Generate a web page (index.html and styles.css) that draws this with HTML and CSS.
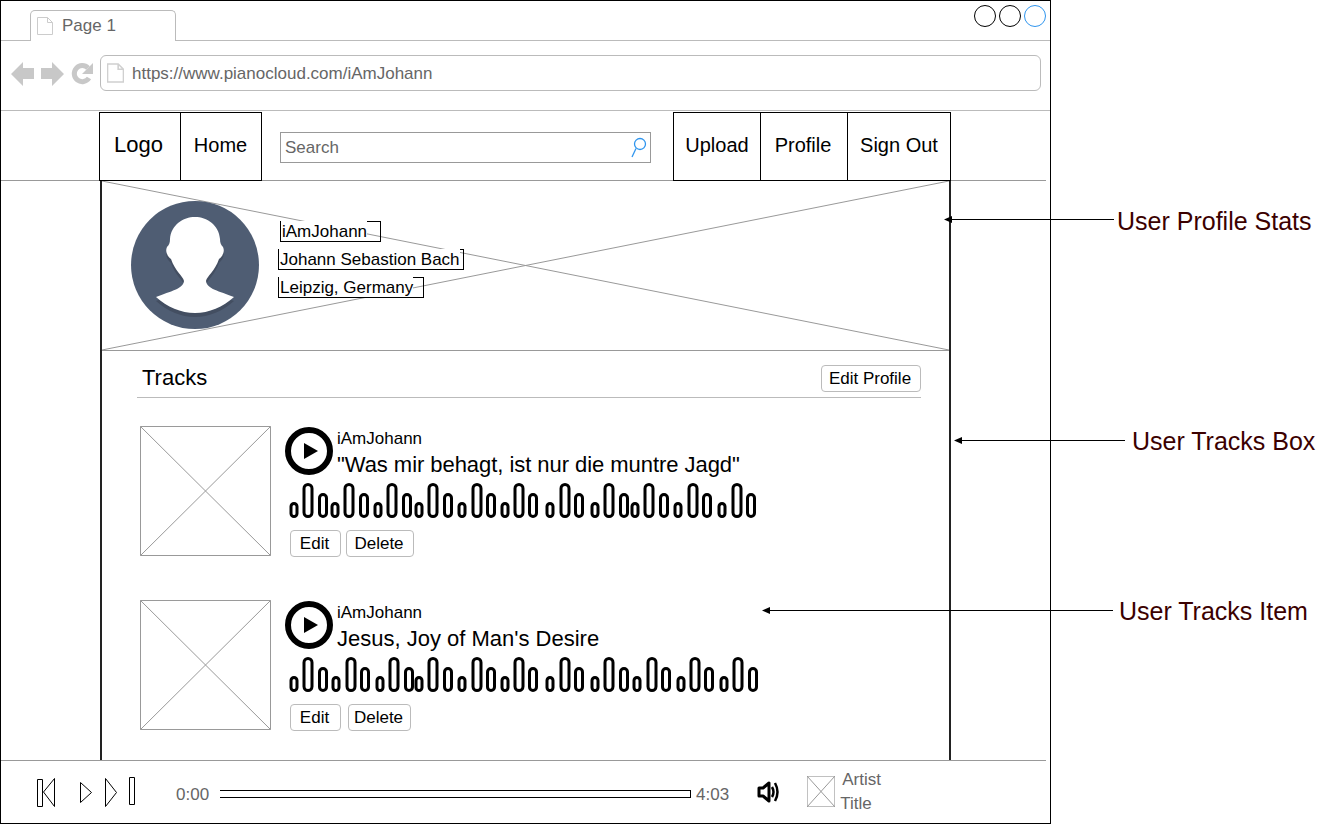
FILE: index.html
```html
<!DOCTYPE html>
<html lang="en">
<head>
<meta charset="utf-8">
<title>PianoCloud wireframe</title>
<link rel="stylesheet" href="styles.css">
</head>
<body>
<svg width="0" height="0" class="defs">
  <symbol id="s" viewBox="-6 0 12 36" overflow="visible"><rect x="-3" y="20.5" width="6" height="13" rx="3"/></symbol>
  <symbol id="m" viewBox="-6 0 12 36" overflow="visible"><rect x="-3.5" y="11.5" width="7" height="22" rx="3.5"/></symbol>
  <symbol id="t" viewBox="-6 0 12 36" overflow="visible"><rect x="-4" y="1.5" width="8" height="32" rx="4"/></symbol>
  <symbol id="doc" viewBox="0 0 16 18"><path d="M.5.5h10l5 5v12H.5zM10.5.5v5h5"/></symbol>
  <symbol id="cross" viewBox="0 0 131 131" preserveAspectRatio="none"><rect x=".5" y=".5" width="130" height="130" vector-effect="non-scaling-stroke"/><path d="M.5.5l130 130M130.500.5l-130 130" vector-effect="non-scaling-stroke"/></symbol>
  <symbol id="play" viewBox="0 0 48 48"><circle cx="24" cy="24" r="21" fill="none" stroke="#000" stroke-width="6"/><path d="M19 16l14 8-14 8z"/></symbol>
</svg>

<main class="window">
  <header class="tabbar">
    <div class="tab">
      <svg class="tab-doc"><use href="#doc"/></svg>
      <span>Page 1</span>
    </div>
    <div class="win-buttons">
      <span class="win-btn"></span><span class="win-btn"></span><span class="win-btn win-btn-blue"></span>
    </div>
  </header>

  <div class="addressbar">
    <svg class="nav-arrows" width="84" height="26" viewBox="0 0 84 26">
      <path d="M0 13L12 1v6h11v11H12v7z"/>
      <path d="M53 13L41 1v6H30v11h11v7z"/>
      <path class="reload" d="M77 7A8 8 0 1 0 78 17"/>
      <path d="M82 2v11H71z"/>
    </svg>
    <div class="address">
      <svg class="address-doc"><use href="#doc"/></svg>
      <span>https://www.pianocloud.com/iAmJohann</span>
    </div>
  </div>

  <nav class="nav">
    <div class="nav-group">
      <a class="nav-cell nav-logo">Logo</a>
      <a class="nav-cell nav-home">Home</a>
    </div>
    <div class="search">
      <span>Search</span>
      <svg width="20" height="24" viewBox="0 0 20 24" class="search-icon"><circle cx="10" cy="9" r="5.500"/><path d="M6 13.500L2 22"/></svg>
    </div>
    <div class="nav-group">
      <a class="nav-cell nav-upload">Upload</a>
      <a class="nav-cell nav-profile">Profile</a>
      <a class="nav-cell nav-signout">Sign Out</a>
    </div>
  </nav>

  <section class="content">
    <div class="hero">
      <svg class="hero-cross" viewBox="0 0 848 169" preserveAspectRatio="none"><path d="M0 0L848 169M848 0L0 169"/></svg>
      <svg class="avatar" width="128" height="128" viewBox="0 0 128 128">
        <circle cx="64" cy="64" r="64" fill="#4f5d73"/>
        <path fill="#434e61" transform="translate(0 4)" d="M25 96C40 90 52 88 53 80C52 75 44 70 40 58C36 55 34 50 36 46C38 44 39 42 39 38C40 24 52 16 64 16C76 16 88 24 89 38C89 42 90 44 92 46C94 50 92 55 88 58C84 70 76 75 75 80C76 88 88 90 103 96C92 106 78 112 64 112C50 112 36 106 25 96Z"/>
        <path fill="#fff" d="M25 96C40 90 52 88 53 80C52 75 44 70 40 58C36 55 34 50 36 46C38 44 39 42 39 38C40 24 52 16 64 16C76 16 88 24 89 38C89 42 90 44 92 46C94 50 92 55 88 58C84 70 76 75 75 80C76 88 88 90 103 96C92 106 78 112 64 112C50 112 36 106 25 96Z"/>
      </svg>
      <div class="labels">
        <div class="label label-user"><span>iAmJohann</span></div>
        <div class="label label-name"><span>Johann Sebastion Bach</span></div>
        <div class="label label-place"><span>Leipzig, Germany</span></div>
      </div>
    </div>

    <div class="tracks-head">
      <h2 class="tracks-title">Tracks</h2>
      <button class="btn btn-profile">Edit Profile</button>
    </div>

    <article class="track">
      <svg class="thumb"><use href="#cross"/></svg>
      <div class="track-info">
        <div class="track-top">
          <svg class="play"><use href="#play"/></svg>
          <div class="track-text">
            <div class="track-artist">iAmJohann</div>
            <div class="track-title track-title-tight">"Was mir behagt, ist nur die muntre Jagd"</div>
          </div>
        </div>
        <svg class="wave" width="480" height="36" viewBox="0 0 480 36">
          <g>
            <use href="#s" x="9" width="12" height="36" transform="translate(-6)"/><use href="#t" x="23" width="12" height="36" transform="translate(-6)"/><use href="#m" x="38" width="12" height="36" transform="translate(-6)"/>
            <use href="#s" x="50" width="12" height="36" transform="translate(-6)"/><use href="#t" x="64" width="12" height="36" transform="translate(-6)"/><use href="#m" x="79" width="12" height="36" transform="translate(-6)"/>
            <use href="#s" x="93" width="12" height="36" transform="translate(-6)"/><use href="#t" x="107" width="12" height="36" transform="translate(-6)"/><use href="#m" x="122" width="12" height="36" transform="translate(-6)"/>
            <use href="#s" x="134" width="12" height="36" transform="translate(-6)"/><use href="#t" x="148" width="12" height="36" transform="translate(-6)"/><use href="#m" x="163" width="12" height="36" transform="translate(-6)"/>
            <use href="#s" x="177" width="12" height="36" transform="translate(-6)"/><use href="#t" x="192" width="12" height="36" transform="translate(-6)"/><use href="#m" x="206" width="12" height="36" transform="translate(-6)"/>
            <use href="#s" x="220" width="12" height="36" transform="translate(-6)"/><use href="#t" x="234" width="12" height="36" transform="translate(-6)"/><use href="#m" x="248" width="12" height="36" transform="translate(-6)"/>
            <use href="#s" x="265" width="12" height="36" transform="translate(-6)"/><use href="#t" x="280" width="12" height="36" transform="translate(-6)"/><use href="#m" x="294" width="12" height="36" transform="translate(-6)"/>
            <use href="#s" x="310" width="12" height="36" transform="translate(-6)"/><use href="#t" x="324" width="12" height="36" transform="translate(-6)"/><use href="#m" x="339" width="12" height="36" transform="translate(-6)"/>
            <use href="#s" x="350" width="12" height="36" transform="translate(-6)"/><use href="#t" x="364" width="12" height="36" transform="translate(-6)"/><use href="#m" x="379" width="12" height="36" transform="translate(-6)"/>
            <use href="#s" x="393" width="12" height="36" transform="translate(-6)"/><use href="#t" x="408" width="12" height="36" transform="translate(-6)"/><use href="#m" x="422" width="12" height="36" transform="translate(-6)"/>
            <use href="#s" x="437" width="12" height="36" transform="translate(-6)"/><use href="#t" x="452" width="12" height="36" transform="translate(-6)"/><use href="#m" x="466" width="12" height="36" transform="translate(-6)"/>
          </g>
        </svg>
        <div class="track-actions">
          <button class="btn btn-edit">Edit</button>
          <button class="btn btn-delete">Delete</button>
        </div>
      </div>
    </article>

    <article class="track track-second">
      <svg class="thumb"><use href="#cross"/></svg>
      <div class="track-info">
        <div class="track-top">
          <svg class="play"><use href="#play"/></svg>
          <div class="track-text">
            <div class="track-artist">iAmJohann</div>
            <div class="track-title">Jesus, Joy of Man's Desire</div>
          </div>
        </div>
        <svg class="wave" width="480" height="36" viewBox="0 0 480 36">
          <g>
            <use href="#s" x="9" width="12" height="36" transform="translate(-6)"/><use href="#t" x="23" width="12" height="36" transform="translate(-6)"/><use href="#m" x="38" width="12" height="36" transform="translate(-6)"/>
            <use href="#s" x="51" width="12" height="36" transform="translate(-6)"/><use href="#t" x="66" width="12" height="36" transform="translate(-6)"/><use href="#m" x="80" width="12" height="36" transform="translate(-6)"/>
            <use href="#s" x="95" width="12" height="36" transform="translate(-6)"/><use href="#t" x="109" width="12" height="36" transform="translate(-6)"/><use href="#m" x="124" width="12" height="36" transform="translate(-6)"/>
            <use href="#s" x="134" width="12" height="36" transform="translate(-6)"/><use href="#t" x="148" width="12" height="36" transform="translate(-6)"/><use href="#m" x="163" width="12" height="36" transform="translate(-6)"/>
            <use href="#s" x="177" width="12" height="36" transform="translate(-6)"/><use href="#t" x="192" width="12" height="36" transform="translate(-6)"/><use href="#m" x="206" width="12" height="36" transform="translate(-6)"/>
            <use href="#s" x="220" width="12" height="36" transform="translate(-6)"/><use href="#t" x="234" width="12" height="36" transform="translate(-6)"/><use href="#m" x="248" width="12" height="36" transform="translate(-6)"/>
            <use href="#s" x="265" width="12" height="36" transform="translate(-6)"/><use href="#t" x="280" width="12" height="36" transform="translate(-6)"/><use href="#m" x="294" width="12" height="36" transform="translate(-6)"/>
            <use href="#s" x="310" width="12" height="36" transform="translate(-6)"/><use href="#t" x="324" width="12" height="36" transform="translate(-6)"/><use href="#m" x="339" width="12" height="36" transform="translate(-6)"/>
            <use href="#s" x="352" width="12" height="36" transform="translate(-6)"/><use href="#t" x="367" width="12" height="36" transform="translate(-6)"/><use href="#m" x="381" width="12" height="36" transform="translate(-6)"/>
            <use href="#s" x="396" width="12" height="36" transform="translate(-6)"/><use href="#t" x="410" width="12" height="36" transform="translate(-6)"/><use href="#m" x="424" width="12" height="36" transform="translate(-6)"/>
            <use href="#s" x="439" width="12" height="36" transform="translate(-6)"/><use href="#t" x="453" width="12" height="36" transform="translate(-6)"/><use href="#m" x="468" width="12" height="36" transform="translate(-6)"/>
          </g>
        </svg>
        <div class="track-actions track-actions-wide">
          <button class="btn btn-edit">Edit</button>
          <button class="btn btn-delete-narrow">Delete</button>
        </div>
      </div>
    </article>
  </section>

  <footer class="player">
    <svg class="transport" width="100" height="32" viewBox="0 0 100 32">
      <path d="M.5 3.500h5v27h-5zM17.500 2.500L6.500 16l11 14.500zM43.500 6.500l11 10-11 10zM68.500 2.500l11 14-11 14zM92.500 1.500h5v27h-5z"/>
    </svg>
    <span class="time time-start">0:00</span>
    <div class="progress"></div>
    <span class="time time-end">4:03</span>
    <svg class="speaker" width="22" height="24" viewBox="0 0 22 24">
      <path class="speaker-body" d="M2 8h4l6-5v18l-6-5H2z"/>
      <path class="speaker-wave" d="M15 7q3 5 0 10M18 3q5 9 0 18"/>
    </svg>
    <svg class="cover"><use href="#cross"/></svg>
    <div class="now">
      <span class="now-artist">Artist</span>
      <span class="now-title">Title</span>
    </div>
  </footer>
</main>

<svg class="arrows" width="1334" height="824" viewBox="0 0 1334 824">
  <path d="M1114 219.500H950M1125 440.500H960M1113 610.500H768"/>
  <path class="head" d="M944 219.500l8-3.500v7zM954 440.500l8-3.500v7zM762 610.500l8-3.500v7z"/>
</svg>
<p class="note note-stats">User Profile Stats</p>
<p class="note note-box">User Tracks Box</p>
<p class="note note-item">User Tracks Item</p>
</body>
</html>
```

FILE: styles.css
```css
* { box-sizing: border-box; }
html, body { margin: 0; padding: 0; }
body {
  width: 1334px;
  height: 824px;
  position: relative;
  overflow: hidden;
  background: #fff;
  font-family: "Liberation Sans", Arial, sans-serif;
  font-size: 17px;
  color: #000;
}
.defs { position: absolute; }
.window {
  width: 1051px;
  height: 824px;
  border: 1px solid #000;
  display: flex;
  flex-direction: column;
  background: #fff;
}

/* browser chrome */
.tabbar {
  height: 40px;
  flex: none;
  display: flex;
  justify-content: space-between;
  padding: 0 4px 0 29px;
  border-bottom: 1px solid #bbb;
}
.tab {
  width: 146px;
  height: 31px;
  margin-top: 9px;
  background: #fff;
  border: 1px solid #bbb;
  border-bottom: 0;
  border-radius: 5px 5px 0 0;
  display: flex;
  align-items: flex-start;
  color: #666;
}
.tab span { margin-left: 9px; line-height: 30px; }
.tab-doc {
  width: 16px;
  height: 18px;
  margin: 6px 0 0 6px;
  fill: #fff;
  stroke: #ccc;
}
.win-buttons { display: flex; gap: 3px; margin-top: 4px; }
.win-btn {
  width: 22px;
  height: 22px;
  border: 1px solid #000;
  border-radius: 50%;
}
.win-btn-blue { border-color: #2f95ee; }

.addressbar {
  height: 70px;
  flex: none;
  display: flex;
  align-items: flex-start;
  padding: 14px 0 0 10px;
  border-bottom: 1px solid #bbb;
}
.nav-arrows { fill: #c8c8c8; flex: none; margin-top: 6px; }
.reload { fill: none; stroke: #c8c8c8; stroke-width: 5; }
.address {
  width: 941px;
  height: 36px;
  margin-left: 5px;
  border: 1px solid #bbb;
  border-radius: 6px;
  display: flex;
  align-items: center;
  color: #666;
}
.address-doc {
  width: 17px;
  height: 20px;
  margin-left: 6px;
  fill: #fff;
  stroke: #d0d0d0;
  stroke-width: 1.500;
}
.address span { margin: 2px 0 0 8px; }

.nav {
  width: 1045px;
  height: 70px;
  flex: none;
  display: flex;
  align-items: flex-start;
  padding: 1px 0 0 98px;
  border-bottom: 1px solid #999;
}
.nav-group {
  height: 69px;
  display: flex;
  border: 1px solid #000;
  background: #fff;
  position: relative;
}
.nav-cell {
  display: flex;
  justify-content: center;
  padding-top: 19px;
  font-size: 20px;
  line-height: 26px;
}
.nav-cell + .nav-cell { border-left: 1px solid #000; }
.nav-logo { width: 80px; font-size: 22px; padding-right: 3px; }
.nav-home { width: 81px; padding-right: 1px; }
.nav-upload { width: 86px; }
.nav-profile { width: 87px; padding-right: 2px; }
.nav-signout { width: 103px; }
.search {
  width: 371px;
  height: 31px;
  margin: 20px 22px 0 18px;
  border: 1px solid #999;
  display: flex;
  align-items: center;
  justify-content: space-between;
  padding-left: 4px;
  color: #666;
}
.search-icon {
  align-self: flex-start;
  margin-top: 2px;
  fill: none;
  stroke: #2f95ee;
  stroke-width: 1.300;
}

/* content */
.content {
  width: 851px;
  margin-left: 99px;
  flex: 1;
  min-height: 0;
  overflow: hidden;
  border-left: 2px solid #222;
  border-right: 2px solid #222;
}
.hero {
  height: 170px;
  position: relative;
  display: flex;
  padding: 20px 0 0 29px;
  border-bottom: 1px solid #999;
}
.hero-cross {
  position: absolute;
  left: 0;
  top: 0;
  width: 100%;
  height: 169px;
  fill: none;
  stroke: #999;
}
.avatar { position: relative; flex: none; }
.labels {
  position: relative;
  margin: 20px 0 0 19px;
  display: flex;
  flex-direction: column;
  gap: 7px;
  align-items: flex-start;
}
.label {
  height: 21px;
  border: 1px solid #000;
}
.label span {
  display: block;
  width: fit-content;
  height: 20px;
  margin-top: -1px;
  padding-left: 1px;
  line-height: 22px;
  background: #fff;
}
.label-user { width: 101px; margin-left: 2px; }
.label-name { width: 186px; }
.label-place { width: 146px; }

.tracks-head {
  height: 47px;
  margin: 0 28px 0 35px;
  padding: 14px 0 0 5px;
  display: flex;
  justify-content: space-between;
  align-items: flex-start;
  border-bottom: 1px solid #bbb;
}
.tracks-title {
  margin: 0;
  font-size: 22px;
  font-weight: 400;
  line-height: 26px;
}
.btn {
  height: 27px;
  padding: 0 2px 0 0;
  background: #fff;
  border: 1px solid #bbb;
  border-radius: 4px;
  font: inherit;
  color: #000;
}
.btn-profile { width: 100px; }
.btn-edit { width: 51px; }
.btn-delete { width: 68px; }
.btn-delete-narrow { width: 63px; }

.track {
  height: 131px;
  margin: 28px 0 0 38px;
  display: flex;
}
.track-second { margin-top: 43px; }
.thumb {
  width: 131px;
  height: 130px;
  flex: none;
  fill: #fff;
  stroke: #999;
}
.track-info { margin-left: 14px; padding-top: 1px; }
.track-top { height: 48px; display: flex; }
.play { width: 48px; height: 48px; flex: none; }
.track-text { margin-left: 4px; }
.track-artist { line-height: 20px; margin-top: 2px; }
.track-title { font-size: 22px; line-height: 26px; margin-top: 3px; white-space: nowrap; }
.track-title-tight { letter-spacing: -0.05px; }
.wave {
  display: block;
  margin-top: 8px;
  fill: none;
  stroke: #000;
  stroke-width: 3;
  filter: blur(0.4px);
}
.track-actions { display: flex; gap: 5px; margin: 11px 0 0 5px; }
.track-actions-wide { gap: 7px; }

/* player */
.player {
  width: 1045px;
  height: 63px;
  flex: none;
  display: flex;
  align-items: flex-start;
  border-top: 1px solid #999;
  position: relative;
  background: #fff;
  padding-left: 36px;
}
.transport { margin-top: 15px; fill: none; stroke: #000; flex: none; }
.time { color: #666; line-height: 20px; margin-top: 24px; }
.time-start { margin-left: 39px; }
.progress {
  width: 471px;
  height: 8px;
  margin: 29px 0 0 11px;
  border: 1px solid #000;
  border-left: 0;
}
.time-end { margin-left: 5px; }
.speaker { margin: 19px 0 0 28px; flex: none; }
.speaker-body { fill: #fff; stroke: #000; stroke-width: 3; stroke-linejoin: round; }
.speaker-wave { fill: none; stroke: #000; stroke-width: 2.500; }
.cover {
  width: 28px;
  height: 31px;
  margin: 15px 0 0 28px;
  flex: none;
  fill: #fff;
  stroke: #999;
}
.now {
  margin-left: 5px;
  display: flex;
  flex-direction: column;
  color: #666;
  line-height: 24px;
  margin-top: 7px;
}
.now-artist { margin-left: 2px; }

/* annotations */
.arrows {
  position: absolute;
  left: 0;
  top: 0;
  pointer-events: none;
  fill: none;
  stroke: #000;
}
.arrows .head { fill: #000; stroke: none; }
.note {
  position: absolute;
  margin: 0;
  font-size: 25px;
  line-height: 30px;
  color: #3b0000;
  white-space: nowrap;
}
.note-stats { left: 1117px; top: 206px; }
.note-box { left: 1132px; top: 426px; }
.note-item { left: 1119px; top: 596px; }
```
